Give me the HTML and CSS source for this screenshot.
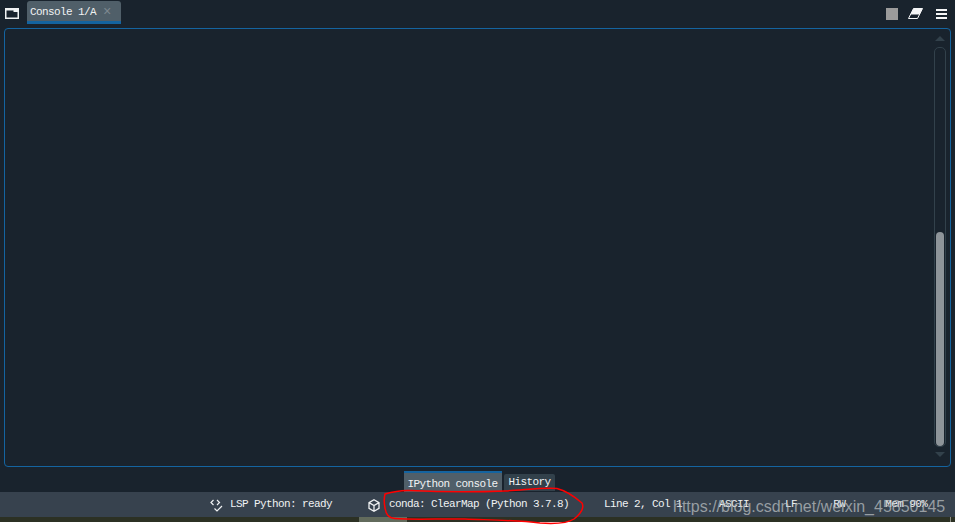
FILE: index.html
```html
<!DOCTYPE html>
<html lang="en">
<head>
<meta charset="utf-8">
<title>Console</title>
<link rel="stylesheet" href="styles.css">
</head>
<body>
<div class="app">
  <header class="topbar">
    <svg class="win-icon" width="14" height="12" viewBox="0 0 14 12"><path d="M0.750 1.750h12.500v9.500H0.750z" fill="none" stroke="#f0f2f3" stroke-width="1.500"/><path d="M1 1.500h12v3.500H8.500V3.500H1z" fill="#f0f2f3"/></svg>
    <div class="console-tab"><span>Console 1/A</span><span class="tab-x">×</span></div>
    <div class="actions">
      <span class="stop"></span>
      <svg class="eraser" width="15" height="11" viewBox="0 0 15 11"><path d="M5.500 0.500H14.500L9.500 10.500H0.500z" fill="none" stroke="#f5f6f7"/><path d="M5.500 0.500H14.500L11.500 6.500H2.500z" fill="#f5f6f7"/></svg>
      <svg width="11" height="10" viewBox="0 0 11 10"><path d="M0 0h11v2H0zM0 4h11v2H0zM0 8h11v2H0z" fill="#f5f6f7"/></svg>
    </div>
  </header>
  <main class="panel">
    <div class="scrollbar">
      <span class="arrow up"></span>
      <div class="track"><div class="thumb"></div></div>
      <span class="arrow down"></span>
    </div>
  </main>
  <nav class="pane-tabs">
    <div class="pane-tab active">IPython console</div>
    <div class="pane-tab">History</div>
  </nav>
  <footer class="statusbar">
    <svg class="lsp-icon" width="14" height="13" viewBox="0 0 14 13"><path d="M3.500 1L1 3.500 3.500 6M7 1l2.500 2.500L7 6M4.500 9.500l2.500 2.500 5-5" fill="none" stroke="#f0f2f3" stroke-width="1.200"/></svg>
    <span class="lsp-text">LSP Python: ready</span>
    <svg class="conda-icon" width="12" height="13" viewBox="0 0 12 13"><path d="M6 .8l5 2.800v5.800l-5 2.800-5-2.800V3.600zM1 3.600l5 2.900 5-2.900M6 6.500v5.700" fill="none" stroke="#f0f2f3" stroke-width="1.300"/></svg>
    <span class="conda-text">conda: ClearMap (Python 3.7.8)</span>
    <span class="line-text">Line 2, Col 1</span>
    <span class="enc-text">ASCII</span>
    <span class="eol-text">LF</span>
    <span class="rw-text">RW</span>
    <span class="mem-text">Mem 90%</span>
  </footer>
  <div class="bottom-strip"><span class="patch"></span><span class="tick"></span></div>
</div>
<svg class="scribble" width="955" height="526" viewBox="0 0 955 526"><path d="M385 494C395 491 400 490 410 490.500C440 492 480 492 505 491C525 490 545 487 557 488.500C567 491 575 497 582 503C585 509 579 515 574 519C568 523 555 524 540 523C515 520 490 520 465 519C440 518.500 415 520 395 518.500C388 518 386 514 385 508C384 503 384 498 385 494Z" fill="none" stroke="#f00" stroke-width="1.500"/></svg>
<div class="watermark">https://blog.csdn.net/weixin_45850145</div>
</body>
</html>
```
FILE: styles.css
```css
* { box-sizing: border-box; }
html, body { margin: 0; height: 100%; background: #fff; overflow: hidden; }
body { position: relative; width: 955px; height: 526px; }
.app {
  width: 955px; height: 522px; display: flex; flex-direction: column;
  background: #19232d; color: #f0f2f3;
  font: 11px "Liberation Mono", monospace; letter-spacing: -0.6px;
}
.topbar { height: 28px; flex: none; display: flex; align-items: flex-start; padding: 1px 0 0 5px; }
.win-icon { margin: 6px 8px 0 0; }
.console-tab {
  width: 94px; height: 23px; padding: 5px 0 0 3px; display: flex; gap: 7px;
  background: #505f69; border-bottom: 3px solid #1464a0; border-radius: 3px 3px 0 0;
}
.tab-x { color: #7d8890; font-size: 14px; line-height: 13px; }
.actions { margin-left: auto; margin-right: 8px; display: flex; align-items: center; height: 24px; padding-top: 1px; }
.stop { width: 12px; height: 12px; background: #9b9b9b; margin-right: 10px; }
.eraser { margin-right: 13px; }
.panel {
  height: 439px; flex: none; margin: 0 4px; border: 1px solid #1464a0; border-radius: 4px;
  display: flex; justify-content: flex-end;
}
.scrollbar { width: 12px; margin-right: 4px; display: flex; flex-direction: column; align-items: center; padding-top: 7px; }
.arrow { width: 0; height: 0; border-left: 5.500px solid transparent; border-right: 5.500px solid transparent; flex: none; }
.arrow.up { border-bottom: 5px solid #32414b; margin-bottom: 6px; }
.arrow.down { border-top: 5px solid #32414b; margin-top: 5px; }
.track {
  width: 12px; height: 400px; flex: none; border: 1px solid #32414b; border-radius: 5px;
  display: flex; flex-direction: column; justify-content: flex-end; padding: 1px 1px 0;
}
.thumb { height: 214px; background: #8e9499; border-radius: 4px; }
.pane-tabs { height: 25px; flex: none; display: flex; justify-content: center; align-items: flex-start; gap: 2px; padding: 4px 0 0 4px; }
.pane-tab { height: 17px; margin-top: 3px; padding: 2px 4px 0; background: #32414b; border-radius: 2px 2px 0 0; }
.pane-tab.active { height: 21px; margin-top: 0; width: 98px; padding: 5px 0 0 3px; background: #505f69; border-top: 2px solid #1464a0; border-radius: 0; }
.statusbar { height: 25px; flex: none; display: flex; align-items: center; background: #37424e; padding-left: 210px; padding-bottom: 2px; white-space: nowrap; }
.lsp-icon { margin-top: 3px; }
.lsp-text { margin-left: 6px; }
.conda-icon { margin-left: 36px; margin-top: 3px; }
.conda-text { margin-left: 9px; }
.line-text { margin-left: 35px; }
.enc-text { margin-left: 37px; }
.eol-text { margin-left: 36px; }
.rw-text { margin-left: 36px; }
.mem-text { margin-left: 40px; }
.bottom-strip { flex: 1; background: #2c3124; display: flex; justify-content: flex-start; padding-left: 359px; position: relative; }
.patch { width: 48px; background: #626b5c; }
.tick { position: absolute; left: 950px; top: 0; width: 1px; height: 5px; background: #8c8f84; }
.scribble { position: absolute; left: 0; top: 0; pointer-events: none; }
.watermark {
  position: absolute; left: 673px; top: 498px; font: 16px "Liberation Sans", sans-serif;
  color: rgba(190, 194, 197, 0.72); white-space: nowrap;
}
```
